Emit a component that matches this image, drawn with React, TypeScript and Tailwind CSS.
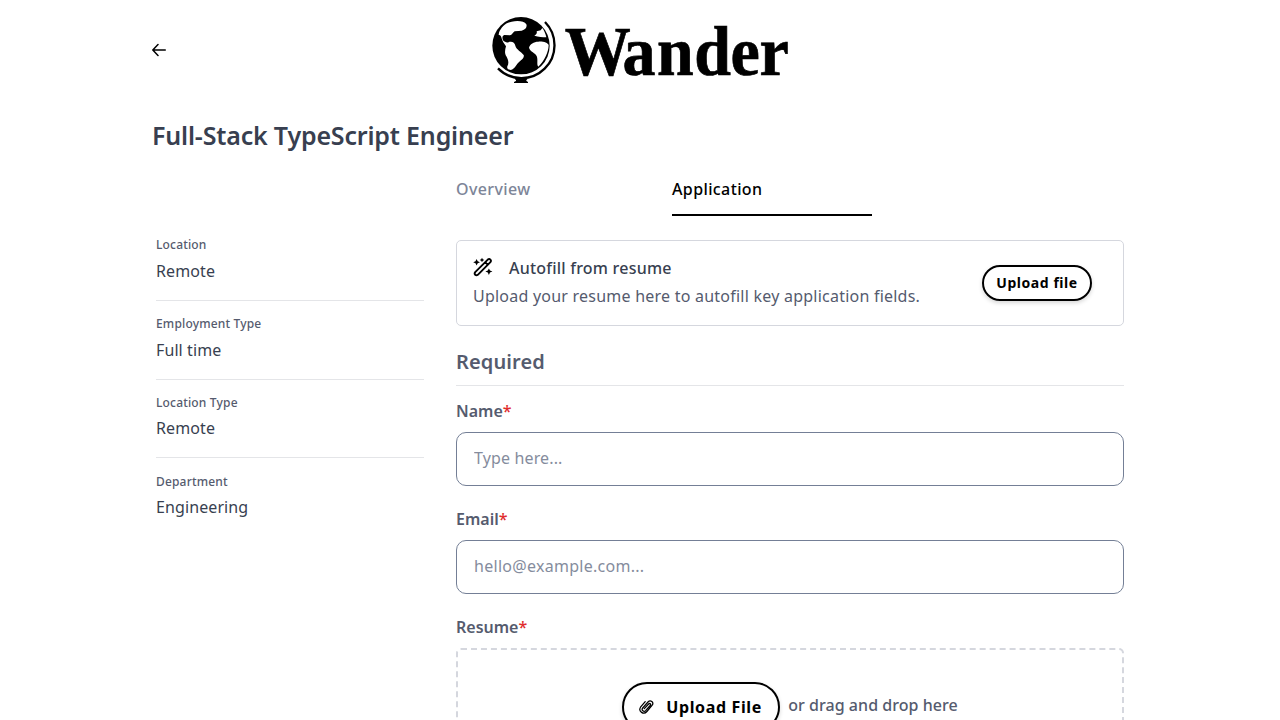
import React from "react";

function Globe() {
  return (
    <svg className="h-[90px] w-[90px] shrink-0" viewBox="0 0 270 270" aria-hidden="true">
      <circle cx="123" cy="122" r="86" fill="#000" />
      <g fill="#fff">
        <path d="M57 83C63 67 77 53 95 50C113 46 133 48 139 58C142 66 137 74 125 77L104 79C99 82 96 90 90 91L73 90C67 92 66 98 69 106C74 111 80 114 85 112C96 108 104 113 106 122C109 134 124 140 131 150C134 157 126 164 118 170C109 177 106 191 92 195C84 194 80 190 82 184C88 172 84 163 79 154C73 145 75 134 78 124C73 117 66 107 64 97C63 92 60 89 56 90Z" />
        <path d="M163 92C169 89 172 84 170 79L182 76L187 69C193 77 197 87 199 97C187 96 176 96 163 92Z" />
        <path d="M147 128C150 117 161 110 175 110C190 109 204 113 206 121C205 142 194 167 175 185C169 179 175 164 170 153C166 143 151 141 147 128Z" />
      </g>
      <path d="M195 51A98.8 98.8 0 0 1 54 190" fill="none" stroke="#000" strokeWidth="7" />
      <path d="M105 217H142V223C137 226 138 229 144 231V234H102V231C110 229 110 226 105 223Z" fill="#000" />
    </svg>
  );
}

function Wand() {
  return (
    <svg className="h-5 w-5 -translate-y-px" viewBox="0 0 20 20" fill="none" stroke="#000" strokeWidth="1.9" strokeLinejoin="round" aria-hidden="true">
      <path d="M2.2 15.2L14.8 2.6Q16.2 1.5 17.4 2.6Q18.5 3.8 17.4 5.2L4.8 17.8Q3.4 18.9 2.2 17.8Q1.1 16.6 2.2 15.2ZM12.2 5.2L14.8 7.8" />
      <path d="M3.6 2L4.7 4.2L7 5.2L4.7 6.2L3.6 8.4L2.5 6.2L.2 5.2L2.5 4.2ZM9 .8L9.8 2.3L11.4 3L9.8 3.7L9 5.2L8.2 3.7L6.6 3L8.2 2.3ZM15.9 11.4L17 13.6L19.4 14.6L17 15.6L15.9 18L14.8 15.6L12.4 14.6L14.8 13.6Z" fill="#000" stroke="none" />
    </svg>
  );
}

const details = [
  { label: "Location", value: "Remote", box: "h-[65px] border-b", gap: "mt-[5px]" },
  { label: "Employment Type", value: "Full time", box: "h-[79px] border-b pt-[14px]", gap: "mt-[5px]" },
  { label: "Location Type", value: "Remote", box: "h-[78px] border-b pt-[14px]", gap: "mt-[4px]" },
  { label: "Department", value: "Engineering", box: "h-[79px] pt-[15px]", gap: "mt-[4px]" },
];

function Label({ text }: { text: string }) {
  return (
    <label className="block h-6 text-[16px] leading-6 font-semibold text-[#555b6e]">
      {text}
      <span className="font-medium text-[#e02d2d]">*</span>
    </label>
  );
}

export default function App() {
  return (
    <div className="h-[720px] overflow-hidden bg-white font-['Noto_Sans',sans-serif] text-[#383f50]">
      <div className="mx-auto w-[976px]">
        <header className="grid h-[100px] grid-cols-[328px_1fr] items-center">
          <svg className="h-[14px] w-[14px]" viewBox="0 0 14 14" fill="none" stroke="#000" strokeWidth="1.5" strokeLinecap="round" strokeLinejoin="round" aria-label="Back">
            <path d="M13.3 7H.9M6 1.6L.8 7L6 12.4" />
          </svg>
          <div className="flex h-[90px]">
            <Globe />
            <svg className="-ml-2 h-[90px] w-[230px]" viewBox="0 0 230 90" aria-label="Wander">
              <text transform="scale(.95 1)" x="2.8 63.8 100 139.2 177.4 208" y="69.6" fontFamily="Liberation Serif, serif" fontWeight="700" fontSize="69.5" stroke="#000" strokeWidth=".7">Wander</text>
            </svg>
          </div>
        </header>

        <h1 className="mt-[17px] h-9 text-[25px] leading-9 font-semibold tracking-[-0.18px] whitespace-nowrap">Full-Stack TypeScript Engineer</h1>

        <div className="mt-[21px] flex">
          <aside className="w-[272px] shrink-0 pt-[62px] pl-1">
            {details.map((d) => (
              <div key={d.label} className={`border-[#e4e5e8] ${d.box}`}>
                <div className="text-[12px] leading-[18px] font-medium tracking-[0.17px] text-[#555b6e]">{d.label}</div>
                <div className={`text-[16px] leading-6 tracking-[0.1px] ${d.gap}`}>{d.value}</div>
              </div>
            ))}
          </aside>

          <main className="ml-8 w-[668px]">
            <nav className="flex h-[42px] gap-4 text-[16px] leading-6 font-medium tracking-[0.38px]">
              <div className="w-[200px] pt-[3px] text-[#7d8598]">Overview</div>
              <div className="w-[200px] border-b-2 border-black pt-[3px] text-black">Application</div>
            </nav>

            <section className="mt-6 flex h-[86px] items-center justify-between rounded-[5px] border border-[#d5d7de] pr-[31px] pl-4">
              <div className="pb-[2px]">
                <div className="flex h-7 items-center gap-4 text-[16px] font-medium tracking-[0.22px]">
                  <Wand />
                  <span>Autofill from resume</span>
                </div>
                <div className="h-7 text-[16px] leading-7 tracking-[0.23px] text-[#555b6e]">Upload your resume here to autofill key application fields.</div>
              </div>
              <button className="h-9 w-[110px] rounded-full border-2 border-black pb-[2px] text-[14px] font-bold tracking-[0.56px] text-black shadow-[0_2px_4px_rgba(0,0,0,0.16)]">Upload file</button>
            </section>

            <h2 className="mt-[12px] h-12 border-b border-[#e4e5e8] pt-2 text-[20px] leading-8 font-semibold tracking-[0.12px] text-[#555b6e]">Required</h2>

            <div className="mt-[13px]">
              <Label text="Name" />
              <input className="mt-[9px] block h-[54px] w-full rounded-[10px] border border-[#747f96] px-[17px] pb-[3px] text-[16px] tracking-[0.14px] placeholder:text-[#858c9d] placeholder:opacity-100" placeholder="Type here..." />
            </div>
            <div className="mt-[21px]">
              <Label text="Email" />
              <input className="mt-[9px] block h-[54px] w-full rounded-[10px] border border-[#747f96] px-[17px] pb-[3px] text-[16px] tracking-[0.28px] placeholder:text-[#858c9d] placeholder:opacity-100" placeholder="hello@example.com..." />
            </div>
            <div className="mt-[21px]">
              <Label text="Resume" />
              <div className="mt-[9px] flex h-[118px] items-start justify-center gap-2 rounded-[5px] border-2 border-dashed border-[#d5d7de] pt-8">
                <button className="flex h-[50px] w-[158px] shrink-0 items-center gap-[11px] rounded-full border-2 border-black pl-[15px] text-[16px] font-bold tracking-[0.64px] text-black shadow-[0_2px_4px_rgba(0,0,0,0.16)]">
                  <svg className="h-4 w-4" viewBox="0 0 16 16" fill="none" stroke="#000" strokeWidth="1.25" strokeLinecap="round" strokeLinejoin="round" aria-hidden="true">
                    <path d="M5.3 9.6L9.6 5C10.8 3.8 12.3 5.2 11.2 6.5L6.6 11.6C4.8 13.4 2 11.2 3.7 9L9 3C11.5.4 15.4 3.4 13 6.4L7.9 12.5C4.7 16.2-1 12.6 1.5 8.2L6.2 2.7" />
                  </svg>
                  <span>Upload File</span>
                </button>
                <span className="pt-[11px] text-[16px] leading-6 font-medium tracking-[0.05px] text-[#555b6e]">or drag and drop here</span>
              </div>
            </div>
          </main>
        </div>
      </div>
    </div>
  );
}
